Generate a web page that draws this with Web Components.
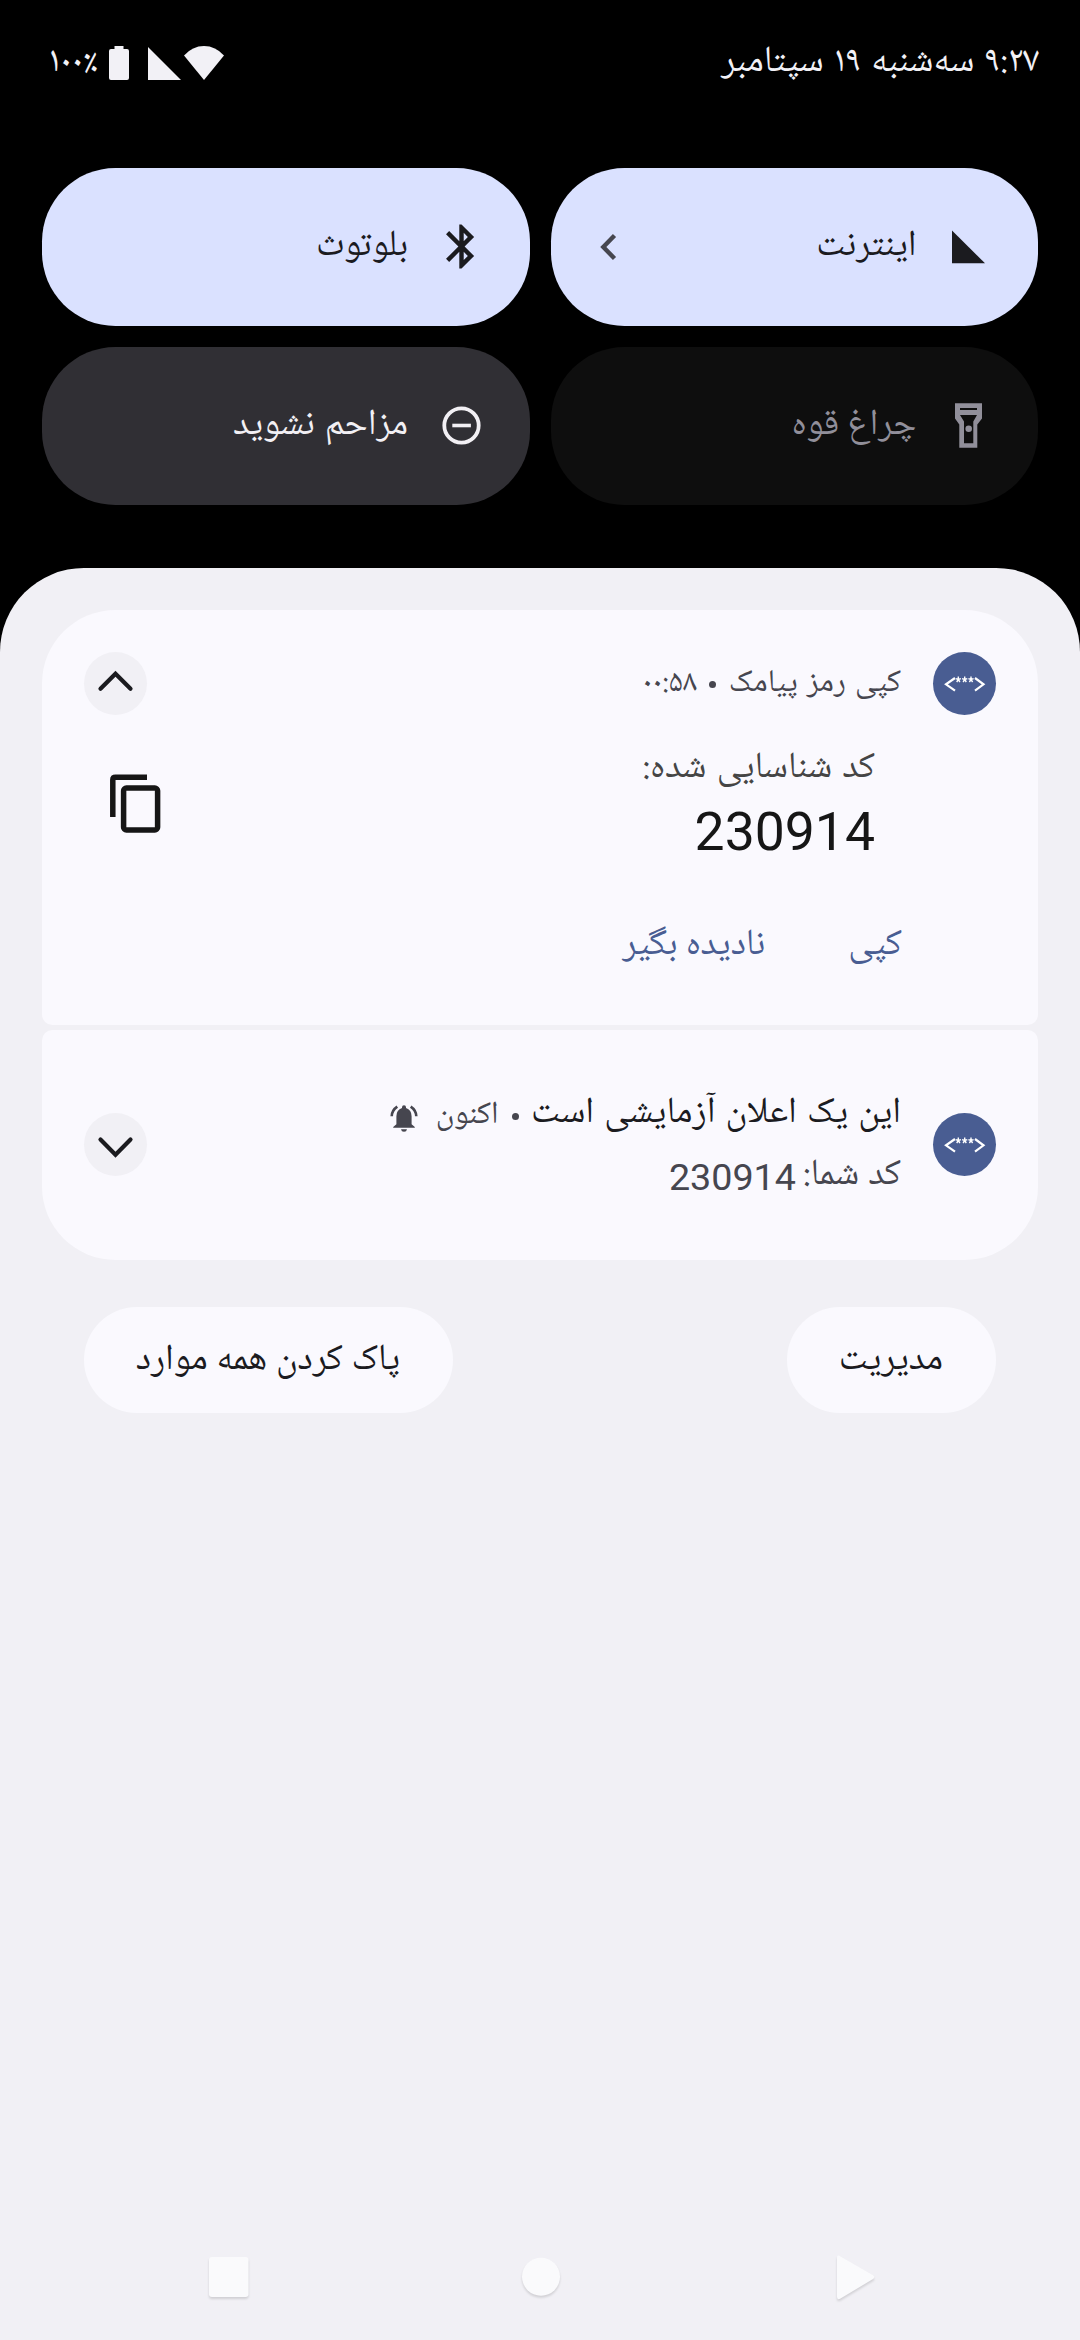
<!DOCTYPE html>
<html lang="fa" dir="rtl">
<head>
<meta charset="utf-8">
<title>اعلان‌ها</title>
<style>
html,body{margin:0;padding:0;background:#000}
body{width:1080px;height:2340px;overflow:hidden;font-family:"Noto Naskh Arabic UI","Noto Naskh Arabic",Roboto,"Noto Sans",sans-serif}
</style>
</head>
<body>
<phone-shade></phone-shade>
<script>
const define=(name,html,setup)=>customElements.define(name,class extends HTMLElement{
  connectedCallback(){
    if(this.shadowRoot)return;
    this.attachShadow({mode:'open'}).innerHTML=html;
    if(setup)setup.call(this,this.shadowRoot);
  }
});

define('text-line',`<style>
:host{display:block;flex:none;line-height:0;white-space:nowrap;word-spacing:var(--ws,0)}
:host::before{content:"";display:inline-block;width:0;height:var(--base)}
</style><slot></slot>`,function(){
  const size=+this.getAttribute('size'),raise=this.classList.contains('digits')?0:.12*size;
  const base=(+this.getAttribute('base')+raise).toFixed(2)+'px';
  this.style.setProperty('--base',base);
  this.style.setProperty('--ws',(this.getAttribute('ws')||0)+'px');
  this.style.height=base;
  this.style.fontSize=size+'px';
});

const ICONS={
  battery:[20,34,'<path d="M5.5 0h9v3H18q2 0 2 2v27q0 2-2 2H2q-2 0-2-2V5q0-2 2-2h3.500z"/>'],
  signal:[33,33,'<path d="M0 0 33 33H0z"/>'],
  wifi:[40,34,'<path d="M0 9.500Q8.500 0 20 0t20 9.500L20 34z"/>'],
  bluetooth:[53,53,'<path transform="scale(2.2083)" d="M17.710 7.710 12 2h-1v7.590L6.410 5 5 6.410 10.590 12 5 17.590 6.410 19 11 14.410V22h1l5.710-5.710-4.300-4.290 4.300-4.290zM13 5.830l1.880 1.880L13 9.590V5.830zm1.880 10.460L13 18.170v-3.760l1.880 1.880z"/>'],
  cell:[53,53,'<path d="M9 10.500 42 43.300H9z"/>'],
  dnd:[53,53,'<circle cx="26.500" cy="26.500" r="17.200" fill="none" stroke="currentColor" stroke-width="3.800"/><path d="M17.300 24.700h18.600v3.600H17.300z"/>'],
  torch:[53,53,'<path fill-rule="evenodd" d="M12 4.300h27v15.200l-4.700 6V48.700H16.300V25.500l-4.300-6zM17 9v2h17V9zM17 16l4 6.500V44.300h9.300V22.500L34 16z"/><circle cx="25.700" cy="29.700" r="3.300"/>'],
  back:[18,28,'<path d="M14.500 2.500 3.300 14l11.200 11.500" fill="none" stroke="currentColor" stroke-width="4.400"/>'],
  up:[63,63,'<path d="M16.500 36.700 31.500 21.700l15 15" fill="none" stroke="currentColor" stroke-width="4.200" stroke-linecap="round"/>'],
  down:[63,63,'<path d="M16.500 26.500 31.500 41.700l15-15.200" fill="none" stroke="currentColor" stroke-width="4.200" stroke-linecap="round"/>'],
  copy:[52,60,'<path d="M2.800 43V6Q2.800 3.300 5.500 3.300H37" fill="none" stroke="currentColor" stroke-width="5.500"/><rect x="13.600" y="14" width="34" height="42" rx="2.800" fill="none" stroke="currentColor" stroke-width="5.500"/>'],
  code:[63,63,'<path d="M22 26 13 32.300l9 6.300M42 26l8.500 6.300-8.500 6.300" fill="none" stroke="#fff" stroke-width="2.200"/><path id="a" d="M25.300 24.600v2.900M22.700 26.600l2.600.9 2.600-.9M23.700 30l1.600-2.500 1.600 2.500M31.700 24.600v2.900M29.100 26.600l2.600.9 2.600-.9M30.100 30l1.600-2.500 1.600 2.500M38 24.600v2.900M35.400 26.600l2.600.9 2.600-.9M36.400 30l1.600-2.500 1.600 2.500" fill="none" stroke="#fff" stroke-width="1.400"/>'],
  bell:[28,28,'<path d="M14 .3q2 0 2 2v.7q5.600 1.800 5.600 8.300v8l3.200 2.700v.7H3.200V22l3.200-2.700v-8Q6.400 4.800 12 3v-.7q0-2 2-2zM11 24.300h6q-.4 2.500-3 2.500t-3-2.500z"/><path d="M7.300 1.700Q2 5.200 1.700 11.200M20.700 1.700q5.300 3.500 5.600 9.500" fill="none" stroke="currentColor" stroke-width="2.600"/>'],
  square:[48,52,'<rect x="4" y="4" width="39.500" height="40" rx="3"/>'],
  circle:[48,52,'<circle cx="24" cy="23.800" r="19"/>'],
  play:[48,52,'<path d="M5 5Q5 1 8.500 3.500L41 22.200q2.500 1.800 0 3.800L8.500 45.500Q5 47.500 5 43.500z"/>']
};
define('ui-icon','<style>:host{display:block;flex:none}svg{display:block;fill:currentColor;overflow:visible}</style><div></div>',function(r){
  const [w,h,body]=ICONS[this.getAttribute('name')];
  r.querySelector('div').innerHTML=`<svg width="${w}" height="${h}" viewBox="0 0 ${w} ${h}">${body}</svg>`;
});

define('status-bar',`<style>
:host{display:flex;justify-content:space-between;height:168px;color:#f2f1f6;padding:0 41px 0 48px;box-sizing:border-box}
.icons{display:flex;direction:ltr;align-items:flex-start;padding-top:46px}
.pct{margin-top:-46px;width:50px}
</style>
<text-line base="72" size="36.750" ws="2">۹:۲۷ سه‌شنبه ۱۹ سپتامبر</text-line>
<div class="icons">
<text-line class="pct" dir="rtl" base="72" size="36.750">۱۰۰٪</text-line>
<ui-icon name="battery" style="margin-left:11px"></ui-icon>
<ui-icon name="signal" style="margin-left:19px;margin-top:.5px"></ui-icon>
<ui-icon name="wifi" style="margin-left:3px"></ui-icon>
</div>`);

define('quick-tile',`<style>
:host{display:flex;align-items:center;box-sizing:border-box;height:158px;border-radius:73.500px;padding-inline:42px 49.500px;background:#302f34;color:#f2f0f4}
:host([state=on]){background:#dae1ff;color:#1b1b1f}
:host([state=off]){background:#0e0e0e;color:#918f9a}
.icon{margin-top:-1px}
text-line{margin-inline-start:26.500px;align-self:flex-start}
.end{margin-inline-start:auto;color:#46464f}
</style><div class="icon"></div><text-line base="87.700" size="36.750"><slot></slot></text-line><div class="end"><slot name="end"></slot></div>`,function(r){
  const icon=document.createElement('ui-icon');
  icon.setAttribute('name',this.getAttribute('icon'));
  r.querySelector('.icon').append(icon);
  r.querySelector('text-line').style.setProperty('--ws',(this.getAttribute('ws')||0)+'px');
});
define('quick-tiles',`<style>:host{display:grid;grid-template-columns:1fr 1fr;gap:21px;padding:0 42px 63px}</style>
<quick-tile state="on" icon="cell">اینترنت<ui-icon slot="end" name="back"></ui-icon></quick-tile>
<quick-tile state="on" icon="bluetooth">بلوتوث</quick-tile>
<quick-tile state="off" icon="torch">چراغ قوه</quick-tile>
<quick-tile icon="dnd" ws="2">مزاحم نشوید</quick-tile>`);

define('app-badge',`<style>:host{display:block;flex:none;width:63px;height:63px;border-radius:50%;background:#495d92}</style><ui-icon name="code"></ui-icon>`);
define('expand-button',`<style>:host{display:block;flex:none;width:63px;height:63px;border-radius:50%;background:#f1f0f5;color:#1b1b1f}</style><slot></slot>`);

/* Notification: badge at the start, stacked content in the middle, expander at the end. */
define('notification-card',`<style>
:host{display:flex;box-sizing:border-box;align-items:flex-start;background:#faf9fe;padding:0 42px;height:var(--h);border-radius:var(--r)}
app-badge,.end{margin-top:var(--top)}
.body{flex:1;padding-inline-start:32px;display:flex;flex-direction:column}
</style><app-badge></app-badge><div class="body"><slot></slot></div><div class="end"><slot name="end"></slot></div>`);

define('notification-panel',`<style>
:host{display:flex;flex-direction:column;box-sizing:border-box;height:1772px;padding:42px 42px 0;background:#f1f0f5;border-radius:84px 84px 0 0}
.stack{display:flex;flex-direction:column;gap:5px}
.one{--h:415px;--top:42px;--r:73.500px 73.500px 10.500px 10.500px}
.two{--h:230px;--top:83px;--r:10.500px 10.500px 73.500px 73.500px}
.row{display:flex;align-items:flex-start}
.muted{color:#46464f}
.dot{flex:none;width:7px;height:7px;border-radius:50%;background:#46464f}
.code{display:flex;justify-content:space-between;padding-inline-start:26px;height:104px}
.code .label{height:50px}
.actions{gap:83px;color:#495d92;margin-inline-start:-1px}
.pills{display:flex;justify-content:space-between;padding:47px 42px 0}
.pill{height:106px;border-radius:53px;background:#faf9fe;color:#1b1b1f;box-sizing:border-box;padding-inline-start:53px}
nav-bar{margin-top:auto}
.digits{font-family:Roboto,sans-serif}
</style>
<div class="stack">
<notification-card class="one">
  <div class="row muted" style="height:118px"><text-line base="81.700" size="31.500" ws="2">کپی رمز پیامک</text-line><div class="dot" style="margin:70.500px 13px 0 12px"></div><text-line base="81.700" size="31.500">۰۰:۵۸</text-line></div>
  <div class="code"><div>
    <div class="label"><text-line base="50" size="36.750" ws="2" style="color:#454545">کد شناسایی شده:</text-line></div>
    <text-line class="digits" base="72" size="53.500" style="color:#161616">230914</text-line></div>
    <ui-icon name="copy" style="color:#161616;margin:46px 0 0 -37px"></ui-icon></div>
  <div class="row actions"><text-line base="122.700" size="36.750">کپی</text-line><text-line base="122.700" size="36.750">نادیده بگیر</text-line></div>
  <expand-button slot="end"><ui-icon name="up"></ui-icon></expand-button>
</notification-card>
<notification-card class="two">
  <div class="row muted" style="height:93px"><text-line base="92.700" size="36.750" ws="2" style="color:#1b1b1f">این یک اعلان آزمایشی است</text-line><div class="dot" style="margin:82.500px 12.500px 0 13px"></div><text-line base="93" size="31.500">اکنون</text-line><ui-icon name="bell" style="margin:75px 18px 0 0"></ui-icon></div>
  <div class="row muted"><text-line base="62" size="36.750" ws="1">کد شما:</text-line><text-line class="digits" base="67.300" size="37.700" style="margin-right:7px">230914</text-line></div>
  <expand-button slot="end"><ui-icon name="down"></ui-icon></expand-button>
</notification-card>
</div>
<div class="pills"><div class="pill" style="width:209px"><text-line base="62.300" size="36.750">مدیریت</text-line></div><div class="pill" style="width:369px"><text-line base="62.300" size="36.750" ws="0.7">پاک کردن همه موارد</text-line></div></div>
<nav-bar></nav-bar>`);

define('nav-bar',`<style>:host{display:flex;direction:ltr;gap:265px;padding:0 0 35px 163px;color:#fafafc;filter:drop-shadow(0 2px 1px #0002)}ui-icon+ui-icon{margin-left:-1.500px}ui-icon+ui-icon+ui-icon{margin-left:2.500px}</style>
<ui-icon name="square"></ui-icon><ui-icon name="circle"></ui-icon><ui-icon name="play"></ui-icon>`);

define('phone-shade',`<style>:host{display:block;width:1080px;height:2340px;background:#000}</style>
<status-bar></status-bar><quick-tiles></quick-tiles><notification-panel></notification-panel>`);
</script>
</body>
</html>
